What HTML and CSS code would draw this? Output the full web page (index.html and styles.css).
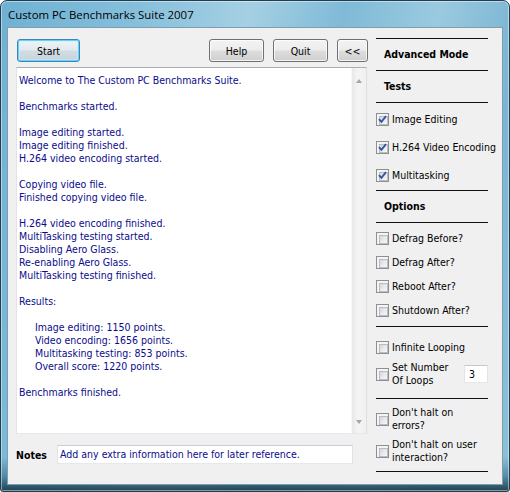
FILE: index.html
```html
<!DOCTYPE html>
<html>
<head>
<meta charset="utf-8">
<title>Custom PC Benchmarks Suite 2007</title>
<link rel="stylesheet" href="styles.css">
</head>
<body>
<div class="window">
  <div class="titlebar">Custom PC Benchmarks Suite 2007</div>
  <div class="client">
    <div class="main">
      <div class="toolbar">
        <button class="btn btn-start">Start</button>
        <div class="spacer"></div>
        <button class="btn btn-help">Help</button>
        <button class="btn btn-quit">Quit</button>
        <button class="btn btn-toggle">&lt;&lt;</button>
      </div>
      <div class="log">
        <div class="log-text">
          <div class="line">Welcome to The Custom PC Benchmarks Suite.</div>
          <div class="line"></div>
          <div class="line">Benchmarks started.</div>
          <div class="line"></div>
          <div class="line">Image editing started.</div>
          <div class="line">Image editing finished.</div>
          <div class="line">H.264 video encoding started.</div>
          <div class="line"></div>
          <div class="line">Copying video file.</div>
          <div class="line">Finished copying video file.</div>
          <div class="line"></div>
          <div class="line">H.264 video encoding finished.</div>
          <div class="line">MultiTasking testing started.</div>
          <div class="line">Disabling Aero Glass.</div>
          <div class="line">Re-enabling Aero Glass.</div>
          <div class="line">MultiTasking testing finished.</div>
          <div class="line"></div>
          <div class="line">Results:</div>
          <div class="line"></div>
          <div class="line indent">Image editing: 1150 points.</div>
          <div class="line indent">Video encoding: 1656 points.</div>
          <div class="line indent">Multitasking testing: 853 points.</div>
          <div class="line indent">Overall score: 1220 points.</div>
          <div class="line"></div>
          <div class="line">Benchmarks finished.</div>
        </div>
        <div class="scrollbar">
          <span class="arrow arrow-up"></span>
          <span class="arrow arrow-down"></span>
        </div>
      </div>
      <div class="notes">
        <span class="notes-label">Notes</span>
        <div class="notes-input">Add any extra information here for later reference.</div>
      </div>
    </div>

    <div class="side">
      <div class="rule"></div>
      <div class="head">Advanced Mode</div>
      <div class="rule"></div>
      <div class="head">Tests</div>
      <div class="rule"></div>
      <div class="group group-tests">
        <label class="check"><span class="cb checked"><svg width="9" height="9" viewBox="0 0 9 9"><path d="M1 4.2 L3.4 6.8 L8 1.2" fill="none" stroke="#3553a4" stroke-width="1.9"/></svg></span>Image Editing</label>
        <label class="check"><span class="cb checked"><svg width="9" height="9" viewBox="0 0 9 9"><path d="M1 4.2 L3.4 6.8 L8 1.2" fill="none" stroke="#3553a4" stroke-width="1.9"/></svg></span>H.264 Video Encoding</label>
        <label class="check"><span class="cb checked"><svg width="9" height="9" viewBox="0 0 9 9"><path d="M1 4.2 L3.4 6.8 L8 1.2" fill="none" stroke="#3553a4" stroke-width="1.9"/></svg></span>Multitasking</label>
      </div>
      <div class="rule"></div>
      <div class="head">Options</div>
      <div class="rule"></div>
      <div class="group group-options">
        <label class="check"><span class="cb"></span>Defrag Before?</label>
        <label class="check"><span class="cb"></span>Defrag After?</label>
        <label class="check"><span class="cb"></span>Reboot After?</label>
        <label class="check"><span class="cb"></span>Shutdown After?</label>
      </div>
      <div class="rule"></div>
      <div class="group group-loops">
        <label class="check"><span class="cb"></span>Infinite Looping</label>
        <div class="check check-two">
          <span class="cb"></span>
          <span class="two">Set Number<br>Of Loops</span>
          <span class="num">3</span>
        </div>
      </div>
      <div class="rule"></div>
      <div class="group group-halt">
        <label class="check check-two"><span class="cb"></span><span class="two">Don't halt on<br>errors?</span></label>
        <label class="check check-two"><span class="cb"></span><span class="two">Don't halt on user<br>interaction?</span></label>
      </div>
      <div class="rule"></div>
    </div>
  </div>
</div>
</body>
</html>
```

FILE: styles.css
```css
* { box-sizing: border-box; }

html, body {
  margin: 0;
  padding: 0;
}

body {
  width: 510px;
  height: 492px;
  overflow: hidden;
  background: #ffffff;
  font-family: "DejaVu Sans Condensed", "DejaVu Sans", sans-serif;
  font-size: 10.5px;
  color: #000;
}

.window {
  width: 510px;
  height: 492px;
  border: 1px solid #213e50;
  border-radius: 7px 7px 3px 3px;
  display: flex;
  flex-direction: column;
  overflow: hidden;
  box-shadow: inset 0 0 0 1px rgba(255, 255, 255, 0.45);
  background:
    linear-gradient(to bottom, rgba(255,255,255,0) 0%, rgba(255,255,255,0) 93%, rgba(40,100,125,0.55) 97%, rgba(15,45,60,0.85) 100%),
    linear-gradient(100deg, #6fb1d3 0%, #84bedb 22%, #a5d0e3 42%, #80bad7 58%, #9bcadf 74%, #7bb5d2 88%, #8ec1d9 100%);
}

.titlebar {
  height: 26px;
  padding-left: 7px;
  padding-top: 1px;
  display: flex;
  align-items: center;
  font-family: "Open Sans", "Noto Sans", sans-serif;
  font-size: 11.4px;
  color: #000;
}

.client {
  flex: 1;
  margin: 0 6px 6px 6px;
  border: 1px solid #7f9db1;
  background: #f0f0f0;
  display: grid;
  grid-template-columns: 352px 112px;
  column-gap: 8px;
  padding-left: 8px;
}

/* ---------- main column ---------- */
.main {
  padding-top: 11px;
  display: flex;
  flex-direction: column;
}

.toolbar {
  display: flex;
  height: 23px;
}

.spacer { flex: 1; }

.btn {
  height: 23px;
  padding: 0;
  border: 1px solid #707070;
  border-radius: 3px;
  background: linear-gradient(#f3f3f3 0%, #ececec 48%, #dddddd 52%, #cfcfcf 100%);
  box-shadow: inset 0 0 0 1px rgba(255, 255, 255, 0.75);
  font-family: "DejaVu Sans Condensed", "DejaVu Sans", sans-serif;
  font-size: 10.5px;
  color: #000;
}

.btn-start {
  width: 63px;
  margin-left: 1px;
  border-color: #3f86b6;
  background: linear-gradient(#edf3f6 0%, #e3eaee 48%, #d2dce3 52%, #c8d3db 100%);
  box-shadow: inset 0 0 0 1px #5fd3fa, inset 0 0 0 2px rgba(200, 240, 255, 0.5);
}

.btn-help { width: 55px; margin-right: 9px; }
.btn-quit { width: 55px; margin-right: 9px; }
.btn-toggle { width: 31px; }

.log {
  margin-top: 5px;
  width: 351px;
  height: 367px;
  border: 1px solid;
  border-color: #abadb3 #dbdfe6 #e3e9ef #e2e3ea;
  background: #fff;
  display: flex;
  overflow: hidden;
}

.log-text {
  flex: 1;
  padding: 6px 0 0 2px;
  color: #0b0b8c;
  line-height: 13px;
}

.line {
  height: 13px;
  white-space: nowrap;
}

.indent { padding-left: 16px; }

.scrollbar {
  width: 15px;
  position: relative;
  background: linear-gradient(to right, #e8e8e8, #f4f4f4 40%, #f1f1f1);
  border-left: 1px solid #f7f7f7;
}

.arrow {
  position: absolute;
  left: 4px;
  width: 0;
  height: 0;
  border-left: 3.5px solid transparent;
  border-right: 3.5px solid transparent;
}

.arrow-up {
  top: 11px;
  border-bottom: 4px solid #a6a6a6;
}

.arrow-down {
  bottom: 9px;
  border-top: 4px solid #a6a6a6;
}

.notes {
  margin-top: 11px;
  height: 19px;
  display: flex;
  align-items: center;
}

.notes-label {
  width: 41px;
  font-weight: bold;
  color: #000;
}

.notes-input {
  width: 296px;
  height: 19px;
  border: 1px solid;
  border-color: #c8cdd4 #e2e3ea #e3e9ef #e2e3ea;
  background: #fff;
  padding-left: 2px;
  line-height: 17px;
  color: #0b0b8c;
  white-space: nowrap;
}

/* ---------- side panel ---------- */
.side {
  padding-top: 10px;
  display: flex;
  flex-direction: column;
}

.rule {
  height: 1px;
  background: #111;
}

.head {
  height: 31px;
  line-height: 31px;
  padding-left: 8px;
  font-weight: bold;
}

.group {
  display: flex;
  flex-direction: column;
}

.group-tests {
  height: 87px;
  padding-top: 9px;
  gap: 14px;
}

.group-options {
  height: 103px;
  padding-top: 8px;
  gap: 10px;
}

.group-loops {
  height: 71px;
  padding-top: 13px;
  gap: 7px;
}

.group-halt {
  height: 72px;
  padding-top: 7px;
  gap: 6px;
}

.check {
  display: flex;
  align-items: center;
  height: 14px;
  white-space: nowrap;
}

.check-two {
  height: 26px;
}

.two {
  line-height: 13px;
}

.cb {
  width: 13px;
  height: 13px;
  margin-right: 3px;
  flex: none;
  border: 1px solid #8e8f8f;
  background: #f4f4f4;
  padding: 1px;
  display: flex;
  align-items: center;
  justify-content: center;
  position: relative;
}

.cb::before {
  content: "";
  position: absolute;
  left: 2px;
  top: 2px;
  width: 7px;
  height: 7px;
  border: 1px solid #b8bcc4;
  background: linear-gradient(135deg, #d5d8dd, #f8f8f8);
}

.cb svg {
  position: relative;
  z-index: 1;
}

.num {
  margin-left: auto;
  width: 24px;
  height: 18px;
  border: 1px solid;
  border-color: #c3c8cf #e2e3ea #e3e9ef #e2e3ea;
  background: #fff;
  padding-left: 4px;
  line-height: 16px;
  color: #000;
}
```
